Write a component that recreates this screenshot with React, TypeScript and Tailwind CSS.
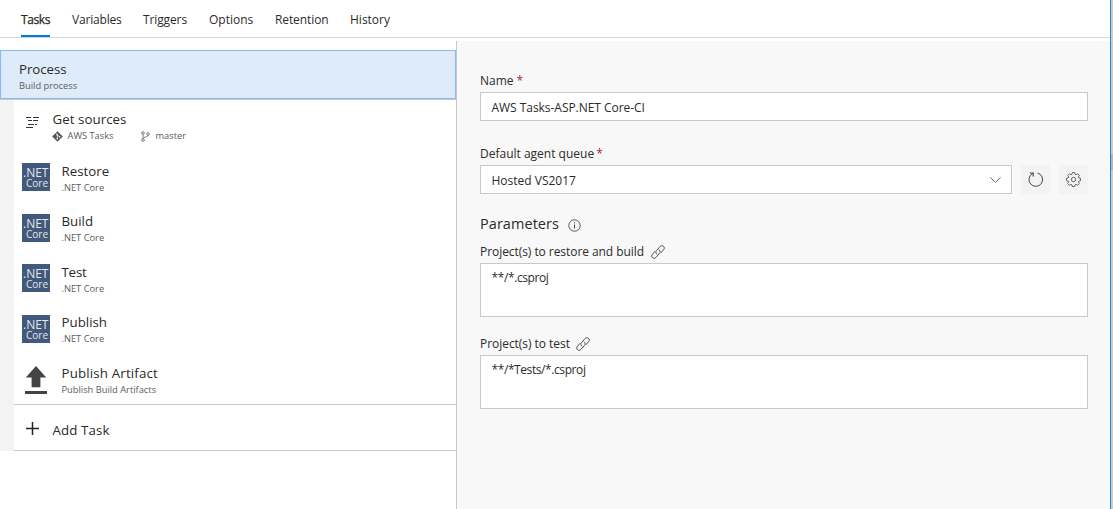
import React, { type ReactNode } from 'react';

function SourcesIcon() {
  return (
    <svg width="13" height="11" viewBox="0 0 13 11" fill="none" stroke="#333" className="shrink-0">
      <path d="M0 .5h5M7 .5h6M2 3.500h4M7 3.500h5M2 7.500h6M9 7.500h2M0 10.500h7" />
    </svg>
  );
}

function GitIcon() {
  return (
    <svg width="11" height="11" viewBox="0 0 11 11" className="shrink-0">
      <path d="M5.500.2 10.800 5.500 5.500 10.800.2 5.500Z" fill="#555" />
      <path d="M4 2.200 5.300 3.800v4M5.300 3.800 7.600 6" stroke="#fff" strokeWidth=".7" fill="none" />
      <circle cx="5.300" cy="3.900" r=".8" fill="#fff" />
      <circle cx="5.300" cy="7.800" r=".8" fill="#fff" />
      <circle cx="7.600" cy="5.800" r=".8" fill="#fff" />
    </svg>
  );
}

function BranchIcon() {
  return (
    <svg width="9" height="11" viewBox="0 0 9 11" fill="none" stroke="#666" strokeWidth=".85" className="shrink-0">
      <circle cx="2" cy="2" r="1.300" />
      <circle cx="7" cy="3" r="1.300" />
      <circle cx="2" cy="9" r="1.300" />
      <path d="M2 3.300v4.400M7 4.300C7 6.500 2.500 5.500 2 7.700" />
    </svg>
  );
}

function UploadIcon() {
  return (
    <svg width="22" height="28" viewBox="0 0 22 28" fill="#444" className="shrink-0">
      <path d="M11 0 21.200 11.600H15.400V21.300H6.600V11.600H.8ZM0 25h22v3H0Z" />
    </svg>
  );
}

function LinkIcon() {
  return (
    <svg width="14" height="14" viewBox="0 0 14 14" fill="none" stroke="#444" strokeWidth=".95" className="shrink-0">
      <path d="M6.200 9.200C4.700 8.600 4.400 6.800 5.500 5.600L9 1.600c1-1.100 2.500-1.200 3.500-.3 1 .9 1 2.400.1 3.400L9.900 7.800" />
      <path d="M7.800 4.800c1.500.6 1.800 2.400.7 3.600L5 12.400c-1 1.100-2.500 1.200-3.500.3-1-.9-1-2.400-.1-3.400L4.100 6.200" />
    </svg>
  );
}

function InfoIcon() {
  return (
    <svg width="13" height="13" viewBox="0 0 13 13" fill="none" stroke="#444" className="shrink-0">
      <circle cx="6.500" cy="6.500" r="5.700" strokeWidth=".9" />
      <path d="M6.500 5.500v4M6.500 3.200v1.200" strokeWidth="1" />
    </svg>
  );
}

function RefreshIcon() {
  return (
    <svg width="15" height="15" viewBox="0 0 15 15" fill="none" stroke="#444" className="shrink-0">
      <path d="M9.600 1A6.800 6.800 0 1 1 4.700 1.500" strokeWidth="1" />
      <path d="M1.800 1h3.400v3.400" strokeWidth="1.200" />
    </svg>
  );
}

function GearIcon() {
  return (
    <svg width="15" height="15" viewBox="0 0 15 15" fill="none" stroke="#555" strokeWidth=".9" strokeLinejoin="round" className="shrink-0">
      <path d="M6.300.6h2.400l.4 1.700 1 .4 1.500-.9 1.700 1.700-.9 1.500.4 1 1.700.4v2.300l-1.700.4-.4 1 .9 1.500-1.700 1.700-1.500-.9-1 .4-.4 1.700H6.300l-.4-1.700-1-.4-1.500.9-1.700-1.700.9-1.500-.4-1L.5 8.700V6.400l1.700-.4.4-1-.9-1.500 1.700-1.700 1.500.9 1-.4Z" />
      <circle cx="7.500" cy="7.500" r="2.200" />
    </svg>
  );
}

function NetCoreIcon() {
  return (
    <div className="flex h-[28px] w-[28px] shrink-0 flex-col overflow-hidden bg-[#41597a] pt-[4px] pl-px text-[#e3e7ee]">
      <div className="h-[11px] text-[12px] leading-[11px] whitespace-nowrap">.NET</div>
      <div className="h-[10px] pl-[3px] text-[10px] leading-[10px] whitespace-nowrap">Core</div>
    </div>
  );
}

const tabs = [
  { label: 'Tasks', cls: 'w-[29px] tracking-[-0.4px] [-webkit-text-stroke:0.25px_#222]' },
  { label: 'Variables', cls: 'w-[49px] tracking-[-0.19px]' },
  { label: 'Triggers', cls: 'w-[44px] tracking-[-0.12px]' },
  { label: 'Options', cls: 'w-[44px]' },
  { label: 'Retention', cls: 'w-[53px] tracking-[-0.1px]' },
  { label: 'History', cls: 'w-[40px]' },
];

const tasks = [
  { title: 'Restore', sub: '.NET Core', row: 'h-[50px]', icon: 'pt-[12px]', ls: '' },
  { title: 'Build', sub: '.NET Core', row: 'h-[51px]', icon: 'pt-[13px]', ls: '' },
  { title: 'Test', sub: '.NET Core', row: 'h-[50px]', icon: 'pt-[12px]', ls: 'tracking-[-0.2px]' },
  { title: 'Publish', sub: '.NET Core', row: 'h-[51px]', icon: 'pt-[13px]', ls: '' },
  { title: 'Publish Artifact', sub: 'Publish Build Artifacts', row: 'h-[51px]', icon: 'pt-[13px] pl-[3px]', ls: 'tracking-[0.16px]' },
];

function Title({ children, cls = '' }: { children: ReactNode; cls?: string }) {
  return <div className={`text-[13.300px] leading-[20px] whitespace-nowrap text-[#2b2b2b] ${cls}`}>{children}</div>;
}

function Sub({ children }: { children: ReactNode }) {
  return <div className="text-[9.300px] leading-[14px] whitespace-nowrap text-[#5c5c5c]">{children}</div>;
}

function Label({ children, cls = '' }: { children: ReactNode; cls?: string }) {
  return <div className={`flex h-[18px] items-center whitespace-nowrap ${cls}`}>{children}</div>;
}

export default function App() {
  return (
    <div className="flex h-[509px] w-[1113px] overflow-hidden bg-white font-['Open_Sans','Noto_Sans',sans-serif] text-[12px] leading-[18px] text-[#2b2b2b]">
      <div className="flex w-[1110px] flex-col">
        <nav className="flex h-[38px] shrink-0 gap-[22px] border-b border-[#d6d6d6] pl-[21px]">
          {tabs.map((t, i) => (
            <div key={t.label} className={`flex h-[37px] flex-col justify-between whitespace-nowrap ${t.cls}`}>
              <span className="pt-[11px]">{t.label}</span>
              {i === 0 && <span className="h-[2px] bg-[#0078d7]" />}
            </div>
          ))}
        </nav>
        <div className="flex flex-1">
          <div className="w-[456px] pt-[12px]">
            <div className="h-[49px] border border-[#8ab8f7] bg-[#deebf8] pt-[8px] pl-[18px]">
              <Title cls="tracking-[-0.07px]">Process</Title>
              <Sub>Build process</Sub>
            </div>
            <div className="h-px bg-[#c8c8c8]" />
            <div className="flex">
              <div className="w-[14px] bg-[#f3f3f3]" />
              <div className="flex-1">
                <div className="flex h-[51px]">
                  <div className="w-[38px] pt-[17px] pl-[12px]"><SourcesIcon /></div>
                  <div className="pt-[9px] pl-[0.500px]">
                    <Title cls="tracking-[0.05px]">Get sources</Title>
                    <div className="flex h-[14px] items-center">
                      <div className="-ml-px"><GitIcon /></div>
                      <div className="w-[78px] pl-[5px]"><Sub>AWS Tasks</Sub></div>
                      <BranchIcon />
                      <div className="pl-[6px]"><Sub>master</Sub></div>
                    </div>
                  </div>
                </div>
                {tasks.map((t) => (
                  <div key={t.title} className={`flex pl-[8px] ${t.row}`}>
                    <div className={`w-[39.500px] ${t.icon}`}>
                      {t.title === 'Publish Artifact' ? <UploadIcon /> : <NetCoreIcon />}
                    </div>
                    <div className="pt-[10px]">
                      <Title cls={t.ls}>{t.title}</Title>
                      <Sub>{t.sub}</Sub>
                    </div>
                  </div>
                ))}
                <div className="flex h-[47px] border-y border-[#c8c8c8]">
                  <div className="w-[38.500px] pt-[17px] pl-[12px]">
                    <svg width="13" height="13" viewBox="0 0 13 13" stroke="#222" strokeWidth="1.500"><path d="M6.500 0v13M0 6.500h13" /></svg>
                  </div>
                  <div className="pt-[15px]"><Title cls="tracking-[0.1px]">Add Task</Title></div>
                </div>
              </div>
            </div>
          </div>
          <div className="mt-[3px] flex-1 border-l border-[#c8c8c8] bg-[#f8f8f8] pt-[31px] pl-[23px]">
            <div className="w-[608px]">
              <Label>Name<span className="pl-[3px] text-[#a4262c]">*</span></Label>
              <div className="mt-[2px] h-[29px] border border-[#c8c8c8] bg-white pt-[6px] pl-[10.500px] tracking-[-0.04px]">AWS Tasks-ASP.NET Core-CI</div>
              <Label cls="mt-[24px]">Default agent queue<span className="pl-[2px] text-[#a4262c]">*</span></Label>
              <div className="mt-[2px] flex justify-between">
                <div className="flex h-[29px] w-[532px] justify-between border border-[#c8c8c8] bg-white pt-[6px] pr-[10px] pl-[10.500px]">
                  Hosted VS2017
                  <svg width="11" height="6" viewBox="0 0 11 6" fill="none" stroke="#555" strokeWidth=".9" className="mt-[5px]"><path d="M.4.4 5.500 5.400 10.600.4" /></svg>
                </div>
                <div className="flex h-[29px] w-[67px] justify-between">
                  <div className="w-[29px] bg-[#f3f3f3] pt-[7px] pl-[6.500px]"><RefreshIcon /></div>
                  <div className="w-[29px] bg-[#f3f3f3] pt-[7px] pl-[6.500px]"><GearIcon /></div>
                </div>
              </div>
              <div className="mt-[19px] flex h-[22px] items-center gap-[9px] text-[14.500px] tracking-[0.05px]">
                Parameters
                <div className="pt-[2px]"><InfoIcon /></div>
              </div>
              <Label cls="mt-[8px] gap-[6.500px] tracking-[-0.06px]">Project(s) to restore and build<LinkIcon /></Label>
              <div className="mt-[2px] h-[54px] border border-[#c8c8c8] bg-white pt-[5px] pl-[10.500px] tracking-[-0.4px]">**/*.csproj</div>
              <Label cls="mt-[18px] gap-[6.500px] tracking-[-0.04px]">Project(s) to test<LinkIcon /></Label>
              <div className="mt-[2px] h-[54px] border border-[#c8c8c8] bg-white pt-[5px] pl-[10.500px] tracking-[-0.41px]">**/*Tests/*.csproj</div>
            </div>
          </div>
        </div>
      </div>
      <div className="w-px bg-[#1883d7]" />
      <div className="flex w-[2px] flex-col bg-[#cdcdcd] pt-[154px]">
        <div className="h-[16px] bg-[#b4b4c4]" />
      </div>
    </div>
  );
}
